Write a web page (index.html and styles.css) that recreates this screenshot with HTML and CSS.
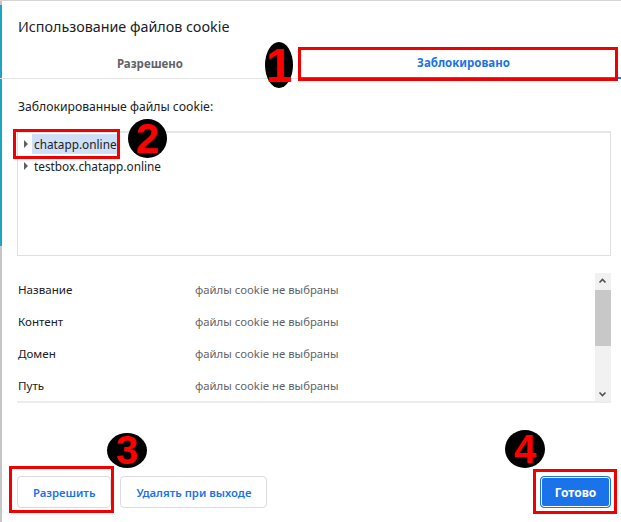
FILE: index.html
```html
<!DOCTYPE html>
<html lang="ru">
<head>
<meta charset="utf-8">
<title>Использование файлов cookie</title>
<link rel="stylesheet" href="styles.css">
</head>
<body>
<div class="dialog">
  <h1 class="title">Использование файлов cookie</h1>
  <div class="tabs">
    <div class="tab">Разрешено</div>
    <div class="tab active">Заблокировано</div>
  </div>
  <div class="section-label">Заблокированные файлы cookie:</div>
  <div class="tree">
    <div class="tree-row"><span class="caret"></span><span class="site selected">chatapp.online</span></div>
    <div class="tree-row"><span class="caret"></span><span class="site">testbox.chatapp.online</span></div>
  </div>
  <div class="details">
    <div class="rows">
      <div class="row"><span class="key">Название</span><span class="val">файлы cookie не выбраны</span></div>
      <div class="row"><span class="key">Контент</span><span class="val">файлы cookie не выбраны</span></div>
      <div class="row"><span class="key">Домен</span><span class="val">файлы cookie не выбраны</span></div>
      <div class="row"><span class="key">Путь</span><span class="val">файлы cookie не выбраны</span></div>
    </div>
    <div class="scrollbar">
      <svg class="arrow" width="15" height="14" viewBox="0 0 15 14"><path d="M4.5 8.5 L7.5 5.5 L10.5 8.5" fill="none" stroke="#505050" stroke-width="1.6"/></svg>
      <div class="thumb"></div>
      <div class="track"></div>
      <svg class="arrow" width="15" height="14" viewBox="0 0 15 14"><path d="M4.5 5.5 L7.5 8.5 L10.5 5.5" fill="none" stroke="#505050" stroke-width="1.6"/></svg>
    </div>
  </div>
  <div class="footer">
    <div class="left-buttons">
      <button class="btn">Разрешить</button>
      <button class="btn">Удалять при выходе</button>
    </div>
    <button class="btn primary">Готово</button>
  </div>

  <div class="mark box-tab"></div>
  <div class="mark box-site"></div>
  <div class="mark box-allow"></div>
  <div class="mark box-done"></div>
  <div class="badge b1">1</div>
  <div class="badge b2">2</div>
  <div class="badge b3">3</div>
  <div class="badge b4">4</div>
</div>
</body>
</html>
```
FILE: styles.css
```css
* { box-sizing: border-box; }
html, body { margin: 0; padding: 0; background: #fff; }
body { width: 621px; height: 522px; overflow: hidden; font-family: "Noto Sans", "Open Sans", sans-serif; color: #202124; }

.dialog {
  position: relative;
  width: 621px;
  height: 522px;
  border-top: 1px solid #d6d6d6;
  background:
    linear-gradient(#1ea2c6, #1ea2c6) 0 4px / 2px 241px no-repeat,
    linear-gradient(#c6c6c6, #c6c6c6) 0 0 / 2px 100% no-repeat,
    #fff;
}

.title {
  margin: 0;
  padding: 16px 18px 0;
  font-size: 14.3px;
  line-height: 20px;
  font-weight: 400;
  color: #202124;
}

.tabs {
  margin-top: 11px;
  display: flex;
  height: 31px;
  border-bottom: 1px solid #e4e4e4;
}
.tab {
  flex: 0 0 300px;
  display: flex;
  align-items: center;
  justify-content: center;
  font-size: 11.5px;
  font-weight: 700;
  color: #5f6368;
}
.tab.active {
  flex: 1;
  color: #1a73e8;
  border-bottom: 2px solid #1a73e8;
  margin-bottom: -1px;
  padding-left: 6px;
}

.section-label {
  margin: 19px 0 0 18px;
  font-size: 12.2px;
  line-height: 18px;
}

.tree {
  margin: 15px 10px 0 17px;
  height: 125px;
  border: 1px solid #e0e0e0;
  border-top: 2px solid #e6e6e6;
}
.tree-row {
  height: 22px;
  display: flex;
  align-items: center;
  padding-left: 6px;
  font-size: 11.8px;
}
.caret {
  width: 0;
  height: 0;
  border-left: 4px solid #606060;
  border-top: 4px solid transparent;
  border-bottom: 4px solid transparent;
  margin-right: 4px;
}
.site { padding: 0 3px 0 2px; line-height: 20px; }
.site.selected { background: #cde0f7; }

.details {
  margin: 17px 10px 0 17px;
  height: 130px;
  display: flex;
  border-bottom: 2px solid #ececec;
}
.rows { flex: 1; }
.row {
  height: 32px;
  display: grid;
  grid-template-columns: 177px 1fr;
  align-items: center;
  padding-left: 1px;
  font-size: 11.6px;
}
.key { color: #202124; }
.val { color: #5f6368; font-size: 11.3px; }

.scrollbar {
  width: 16px;
  background: #f1f1f1;
  display: flex;
  flex-direction: column;
}
.arrow { display: block; flex: 0 0 14px; margin-top: 1px; }
.thumb { height: 56px; background: #c8c8c8; margin-top: 2px; }
.track { flex: 1; }

.footer {
  margin-top: 73px;
  padding: 0 10px 0 17px;
  display: flex;
  justify-content: space-between;
}
.left-buttons { display: flex; gap: 9px; }
.btn {
  height: 32px;
  padding: 0 15px;
  border: 1px solid #dadce0;
  border-radius: 4px;
  background: #fff;
  font-family: "Noto Sans", "Open Sans", sans-serif;
  font-size: 11.3px;
  font-weight: 600;
  color: #1a73e8;
}
.btn.primary {
  width: 71px;
  padding: 0;
  background: #1a73e8;
  color: #fff;
  border: 1px solid #1a73e8;
  box-shadow: inset 0 0 0 1px #fff;
  font-size: 12px;
  font-weight: 700;
}

.mark {
  position: absolute;
  border: 3px solid #f20000;
}
.box-tab { left: 298px; top: 46px; width: 320px; height: 34px; }
.box-site { left: 13px; top: 128px; width: 107px; height: 30px; }
.box-allow { left: 9px; top: 465px; width: 105px; height: 47px; }
.box-done { left: 533px; top: 468px; width: 84px; height: 45px; }

.badge {
  position: absolute;
  background: #000;
  border-radius: 50%;
  color: #f00;
  font-family: "Liberation Sans", Arial, sans-serif;
  font-weight: 700;
  display: flex;
  align-items: center;
  justify-content: center;
}
.b1 { left: 265px; top: 41px; width: 28px; height: 46px; font-size: 48px; }
.b2 { left: 128px; top: 118px; width: 39px; height: 39px; font-size: 42px; }
.b3 { left: 107px; top: 432px; width: 40px; height: 35px; font-size: 40px; }
.b4 { left: 505px; top: 429px; width: 40px; height: 38px; font-size: 40px; }
```
